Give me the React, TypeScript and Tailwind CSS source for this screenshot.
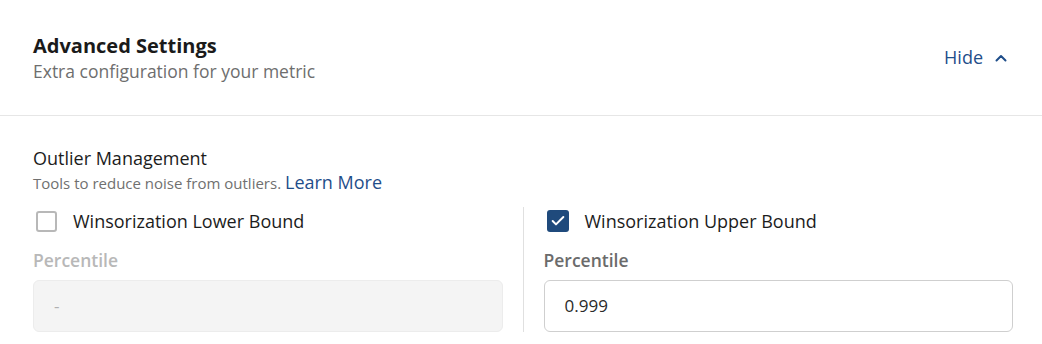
import { Check } from 'lucide-react';

function Checkbox({ checked }: { checked: boolean }) {
  return checked ? (
    <span className="ml-[3px] flex h-[22px] w-[22px] items-center justify-center rounded-[3px] bg-[#1f4a7c]">
      <Check size={16} strokeWidth={3} className="text-white" />
    </span>
  ) : (
    <span className="ml-[3px] h-[21px] w-[21px] rounded-[3px] border-2 border-[#b8b8b8] bg-white" />
  );
}

function BoundColumn({
  label,
  checked,
  value,
}: {
  label: string;
  checked: boolean;
  value: string;
}) {
  return (
    <div className="flex flex-1 flex-col">
      <div className="flex h-7 items-center gap-4">
        <Checkbox checked={checked} />
        <span className="text-[18px] font-medium text-[#1c1c1c]">{label}</span>
      </div>
      <div
        className={
          'mt-[13px] text-[17.5px] leading-6 font-semibold ' +
          (checked ? 'text-[#6b6b6b]' : 'text-[#b8b8b8]')
        }
      >
        Percentile
      </div>
      <div
        className={
          'mt-2 flex h-[52px] items-center rounded-md border px-5 text-[17px] ' +
          (checked
            ? 'border-[#cfcfcf] bg-white text-[#2a2a2a]'
            : 'border-[#ececec] bg-[#f4f4f4] text-[#b0b0b0]')
        }
      >
        {value}
      </div>
    </div>
  );
}

export default function App() {
  return (
    <div className="min-h-screen bg-white font-['Open_Sans',sans-serif]">
      {/* Header */}
      <div className="flex items-center justify-between border-b border-[#e6e6e6] py-8 pr-[35px] pl-[33px]">
        <div>
          <h2 className="text-[20px] leading-[27px] font-bold text-[#1a1a1a]">Advanced Settings</h2>
          <p className="text-[17.5px] leading-6 text-[#6e6e6e]">Extra configuration for your metric</p>
        </div>
        <button className="flex items-center gap-[12px] text-[18px] text-[#1f4e8a]">
          Hide
          <svg width="12" height="8" viewBox="0 0 12 8" fill="none">
            <path d="M1.5 6.5 6 2l4.5 4.5" stroke="currentColor" strokeWidth="2" strokeLinecap="round" strokeLinejoin="round" />
          </svg>
        </button>
      </div>

      {/* Outlier section */}
      <div className="pt-[30px] pr-[29px] pb-3 pl-[33px]">
        <div className="text-[18px] leading-6 text-[#1c1c1c]">Outlier Management</div>
        <div className="text-[15px] leading-6 text-[#707070]">
          Tools to reduce noise from outliers.{' '}
          <a className="text-[18px] font-medium text-[#1f4e8a]">Learn More</a>
        </div>
        <div className="mt-3 flex gap-5">
          <BoundColumn label="Winsorization Lower Bound" checked={false} value="-" />
          <div className="w-px bg-[#e0e0e0]" />
          <BoundColumn label="Winsorization Upper Bound" checked={true} value="0.999" />
        </div>
      </div>
    </div>
  );
}
